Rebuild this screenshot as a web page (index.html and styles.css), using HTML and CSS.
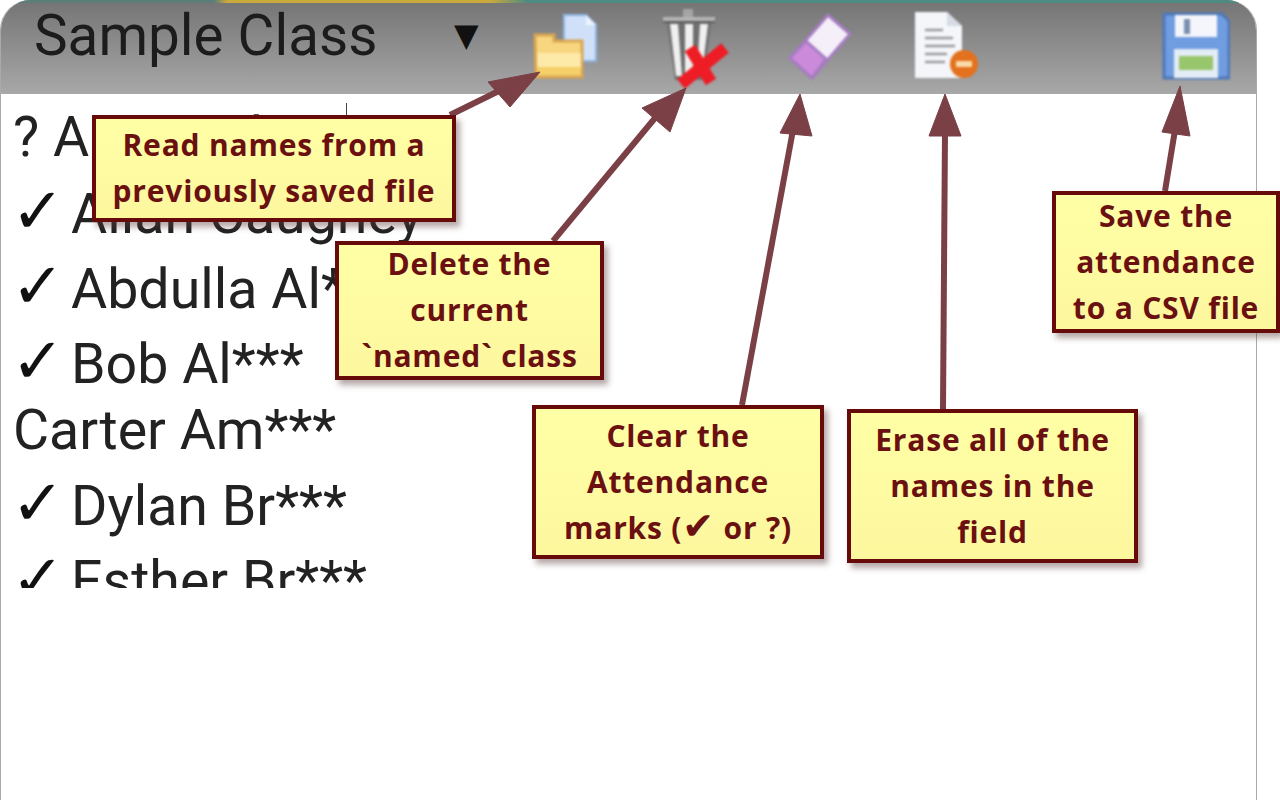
FILE: index.html
```html
<!DOCTYPE html>
<html lang="en">
<head>
    <meta charset="UTF-8">
    <title>Attendance toolbar help</title>
    <link rel="stylesheet" href="styles.css">
</head>
<body>

    <main class="panel">

        <header class="toolbar">
            <div class="strip"></div>
            <span class="class-name">Sample Class</span>
            <span class="caret">▼</span>

            <div class="tools">
                <!-- open file -->
                <svg class="tool tool-open" viewBox="0 0 68 70">
                    <path d="M32 4H54L64 14V50H32Z" fill="#cfe0f8" stroke="#8fb4e4" stroke-width="2"/>
                    <path d="M54 4V14H64Z" fill="#eef4fc"/>
                    <path d="M3 24H22V30H50V66H4Z" fill="#f7d67f" stroke="#dba552" stroke-width="3"/>
                    <rect x="5" y="42" width="44" height="22" fill="#fde9a8"/>
                    <rect x="5" y="56" width="44" height="8" fill="#f5cf68"/>
                </svg>
                <!-- delete class -->
                <svg class="tool tool-trash" viewBox="0 0 68 84">
                    <rect x="22" y="3" width="10" height="8" fill="#a5a5a5"/>
                    <rect x="2" y="11" width="52" height="4" fill="#b5b5b5"/>
                    <rect x="2" y="15" width="52" height="2" fill="#5e5e5e"/>
                    <path d="M6 17H50L43 74H14Z" fill="#6f6f6f"/>
                    <path d="M9 18H17L21 70H15ZM24 18H32V74H24ZM39 18H47L41 68H36Z" fill="#f0f0f0"/>
                    <path d="M29 42L50 76M64 42L20 78" stroke="#ee1c25" stroke-width="12" fill="none"/>
                </svg>
                <!-- clear marks -->
                <svg class="tool tool-eraser" viewBox="0 0 64 70">
                    <path d="M40 3L62 22L24 66L2 46Z" fill="#f5effa" stroke="#a67cc0" stroke-width="3"/>
                    <path d="M18 29L38 47L24 66L2 46Z" fill="#cc8adb" stroke="#a67cc0" stroke-width="3"/>
                </svg>
                <!-- erase names -->
                <svg class="tool tool-erase" viewBox="0 0 68 72">
                    <path d="M2 2H34L49 16V68H2Z" fill="#f4f6fa"/>
                    <path d="M34 2V16H49Z" fill="#d6dbe4"/>
                    <path d="M12 20H30M12 28H40M12 36H42M12 44H34M12 52H32" stroke="#9a9a9a" stroke-width="2.5"/>
                    <circle cx="51" cy="54" r="14" fill="#e4711d"/>
                    <rect x="43" y="51" width="16" height="6" fill="#fbd9a8"/>
                </svg>
                <!-- save -->
                <svg class="tool tool-save" viewBox="0 0 68 72">
                    <path d="M2 4H60L67 11V68H2Z" fill="#6f9de0" stroke="#4f78b8" stroke-width="3"/>
                    <rect x="13" y="5" width="42" height="22" fill="#f4f6fc"/>
                    <rect x="22" y="9" width="6" height="15" fill="#7b8fae"/>
                    <rect x="12" y="39" width="44" height="29" fill="#e4ecf5"/>
                    <rect x="17" y="46" width="34" height="14" fill="#98c66d"/>
                </svg>
            </div>
        </header>

        <ul class="names">
            <li class="row">? Aaron Ab***</li>
            <li class="row row-ticked"><span class="mark">✓</span>Allan Caughey</li>
            <li class="row row-ticked"><span class="mark">✓</span>Abdulla Al***</li>
            <li class="row row-ticked"><span class="mark">✓</span>Bob Al***</li>
            <li class="row row-plain">Carter Am***</li>
            <li class="row row-ticked"><span class="mark">✓</span>Dylan Br***</li>
            <li class="row row-ticked"><span class="mark">✓</span>Esther Br***</li>
        </ul>

    </main>

    <div class="cursor-line"></div>

    <svg class="arrows" viewBox="0 0 1280 800">
        <g fill="#7a4046" stroke="#7a4046">
            <path d="M450 115L505 88" stroke-width="6"/>
            <path d="M540 72L488 82L510 107Z"/>
            <path d="M553 241L660 112" stroke-width="6"/>
            <path d="M686 88L642 108L670 132Z"/>
            <path d="M742 405L793 130" stroke-width="6"/>
            <path d="M800 94L780 133L812 136Z"/>
            <path d="M943 409L945 132" stroke-width="6"/>
            <path d="M945 94L929 136L961 136Z"/>
            <path d="M1165 191L1175 130" stroke-width="6"/>
            <path d="M1180 86L1162 132L1190 136Z"/>
        </g>
    </svg>

    <div class="callout callout-read"><p>Read names from a<br>previously saved file</p></div>
    <div class="callout callout-delete"><p>Delete the<br>current<br>`named` class</p></div>
    <div class="callout callout-clear"><p>Clear the<br>Attendance<br>marks (<span class="heavy-check">✔</span> or ?)</p></div>
    <div class="callout callout-erase"><p>Erase all of the<br>names in the<br>field</p></div>
    <div class="callout callout-save"><p>Save the<br>attendance<br>to a CSV file</p></div>

</body>
</html>
```

FILE: styles.css
```css
body {
    margin: 0;
    height: 800px;
    overflow: hidden;
    background-color: white;
    font-family: 'Roboto', sans-serif;
    color: #222;
}

.panel {
    width: 1257px;
    height: 800px;
    box-sizing: border-box;
    border-left: 1px solid #aaa;
    border-right: 1px solid #aaa;
    border-radius: 30px 30px 0 0;
}

.toolbar {
    position: relative;
    display: flex;
    align-items: flex-start;
    height: 94px;
    overflow: hidden;
    border-radius: 30px 30px 0 0;
    background: linear-gradient(#747474, #a8a8a8);
}

.strip {
    position: absolute;
    left: 0;
    top: 0;
    width: 100%;
    height: 3px;
    background: linear-gradient(90deg, #5d7d78 0, #5d7d78 17%, #c8a93c 18%, #c8a93c 39%, #4d8a82 42%, #4d8a82 100%);
}

.class-name {
    margin: 3px 0 0 33px;
    width: 420px;
    font-size: 56.6px;
    line-height: 66px;
    color: #1c1c1c;
}

.caret {
    width: 78px;
    margin-top: 17px;
    font-family: 'DejaVu Sans', sans-serif;
    font-size: 32px;
    line-height: 36px;
    color: #111;
}

.tools {
    display: flex;
    align-items: flex-start;
}

.tool {
    display: block;
    filter: blur(0.8px);
}

.tool-open {
    width: 68px;
    height: 70px;
    margin-top: 11px;
}

.tool-trash {
    width: 68px;
    height: 84px;
    margin: 6px 0 0 61px;
}

.tool-eraser {
    width: 64px;
    height: 70px;
    margin: 12px 0 0 59px;
}

.tool-erase {
    width: 68px;
    height: 72px;
    margin: 10px 0 0 61px;
}

.tool-save {
    width: 68px;
    height: 72px;
    margin: 10px 0 0 181px;
}

.names {
    height: 494px;
    margin: 0;
    padding: 0 0 0 12px;
    overflow: hidden;
    list-style: none;
    font-size: 55.5px;
}

.row {
    height: 75px;
    line-height: 88px;
    white-space: nowrap;
}

.row-ticked {
    line-height: 92px;
}

.row-plain {
    height: 67px;
    line-height: 74px;
}

.mark {
    display: inline-block;
    width: 60px;
    margin-left: -2px;
    font-family: 'DejaVu Sans', sans-serif;
    font-size: 64px;
    line-height: 60px;
    color: #111;
}

.cursor-line {
    position: absolute;
    left: 346px;
    top: 103px;
    width: 1px;
    height: 12px;
    background-color: #444;
}

.arrows {
    position: absolute;
    left: 0;
    top: 0;
    width: 1280px;
    height: 800px;
}

.callout {
    position: absolute;
    box-sizing: border-box;
    display: flex;
    align-items: center;
    justify-content: center;
    text-align: center;
    font-family: 'Open Sans', sans-serif;
    font-weight: 700;
    font-size: 30px;
    letter-spacing: 0.8px;
    line-height: 46px;
    color: #6b1010;
    background: linear-gradient(#ffffa6, #fdf79e);
    border: 4px solid #660a0a;
    box-shadow: 4px 5px 6px rgba(90, 60, 60, 0.45);
}

.callout p {
    margin: 0 0 1px;
    white-space: nowrap;
}

.callout-read {
    left: 92px;
    top: 115px;
    width: 364px;
    height: 107px;
}

.callout-delete {
    left: 335px;
    top: 241px;
    width: 269px;
    height: 139px;
}

.callout-clear {
    left: 532px;
    top: 405px;
    width: 292px;
    height: 154px;
}

.callout-erase {
    left: 847px;
    top: 409px;
    width: 291px;
    height: 154px;
}

.callout-save {
    left: 1052px;
    top: 191px;
    width: 228px;
    height: 142px;
}

.heavy-check {
    font-family: 'DejaVu Sans', sans-serif;
    font-size: 38px;
    line-height: 0;
}
```
